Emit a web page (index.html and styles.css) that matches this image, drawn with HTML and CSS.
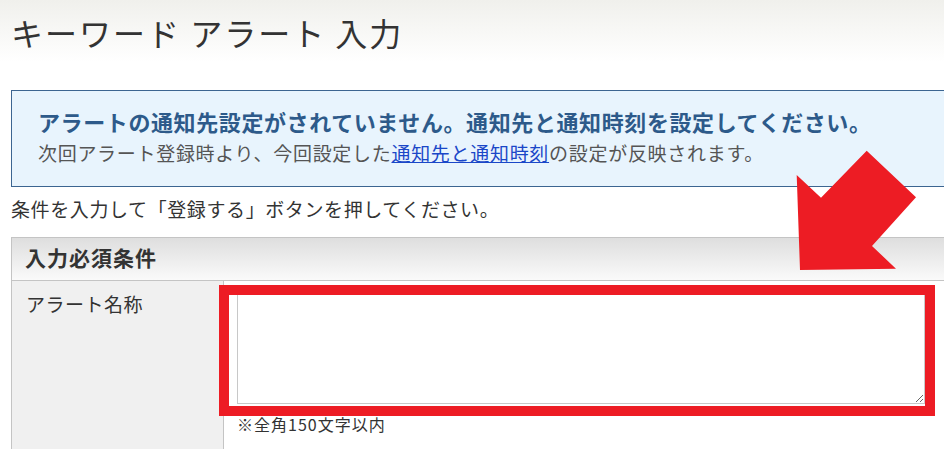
FILE: index.html
```html
<!DOCTYPE html>
<html>
<head>
    <meta charset="utf-8" />
    <title>キーワード アラート 入力</title>
    <link rel="stylesheet" href="styles.css">
</head>
<body>
    <div class="page_head">
        <h1>キーワード アラート 入力</h1>
    </div>

    <div class="notice">
        <p class="notice_title">アラートの通知先設定がされていません。通知先と通知時刻を設定してください。</p>
        <p class="notice_text">次回アラート登録時より、今回設定した<a href="#">通知先と通知時刻</a>の設定が反映されます。</p>
    </div>

    <p class="lead">条件を入力して「登録する」ボタンを押してください。</p>

    <div class="form_table">
        <div class="form_head">入力必須条件</div>
        <div class="form_row">
            <div class="form_label">アラート名称</div>
            <div class="form_value">
                <textarea class="alert_name"></textarea>
                <p class="form_note">※全角150文字以内</p>
            </div>
        </div>
    </div>

    <!-- annotation -->
    <div class="mark_frame"></div>
    <svg class="mark_arrow" width="130" height="130" viewBox="0 0 130 130">
        <polygon points="76.7,5.7 126,52.3 82,101 106,123.7 10,125 6.7,30 31,52.7" fill="#ed1c24" />
    </svg>
</body>
</html>
```

FILE: styles.css
```css
html, body {
    margin: 0;
    padding: 0;
}

body {
    position: relative;
    width: 944px;
    height: 449px;
    overflow: hidden;
    background-color: white;
    color: #333;
    font-family: "Noto Sans CJK JP", "Noto Sans", sans-serif;
}

p {
    margin: 0;
}

.page_head {
    width: 1000px;
    height: 70px;
    background: linear-gradient(to bottom, #f0f0ec, #ffffff 62px);
}
.page_head > h1 {
    margin: 0;
    padding: 12px 0 0 11px;
    font-size: 32px;
    line-height: 40px;
    letter-spacing: 2px;
    font-weight: normal;
    color: #333;
}

.notice {
    width: 1000px;
    margin: 20px 0 0 11px;
    padding: 14px 0 17px 26px;
    background-color: #e8f4fd;
    border: 1px #3c6591 solid;
}
.notice_title {
    font-size: 22px;
    line-height: 32px;
    letter-spacing: 0.6px;
    font-weight: bold;
    color: #2d5a8a;
}
.notice_text {
    font-size: 19px;
    line-height: 32px;
    letter-spacing: 0.7px;
    color: #555;
}
.notice_text > a {
    color: #1a47c8;
    text-decoration: underline;
}

.lead {
    margin: 8px 0 0 11px;
    font-size: 19px;
    line-height: 28px;
    letter-spacing: 0.6px;
    color: #333;
}

.form_table {
    width: 1000px;
    margin: 14px 0 0 11px;
    border: 1px #c4c4c4 solid;
}
.form_head {
    height: 42px;
    padding-left: 13px;
    font-size: 21px;
    line-height: 38px;
    letter-spacing: 1px;
    font-weight: bold;
    color: #333;
    background: linear-gradient(to bottom, #dedede, #fafafa);
    border-bottom: 1px #c4c4c4 solid;
}
.form_row {
    display: grid;
    grid-template-columns: 212px 1fr;
    height: 200px;
}
.form_label {
    padding: 9px 0 0 14px;
    font-size: 19px;
    line-height: 28px;
    letter-spacing: 0.5px;
    background-color: #f0f0f0;
    border-right: 1px #c4c4c4 solid;
}
.form_value {
    padding: 13px 0 0 13px;
}
.alert_name {
    display: block;
    box-sizing: border-box;
    width: 688px;
    height: 110px;
    margin: 0;
    border: 1px #c8c8c8 solid;
    background-color: white;
}
.form_note {
    margin-top: 8px;
    font-size: 16px;
    line-height: 24px;
    letter-spacing: 1px;
    color: #333;
}

.mark_frame {
    position: absolute;
    left: 219px;
    top: 285px;
    width: 716px;
    height: 131px;
    box-sizing: border-box;
    border: 10px #ed1c24 solid;
}
.mark_arrow {
    position: absolute;
    left: 790px;
    top: 145px;
}
```
